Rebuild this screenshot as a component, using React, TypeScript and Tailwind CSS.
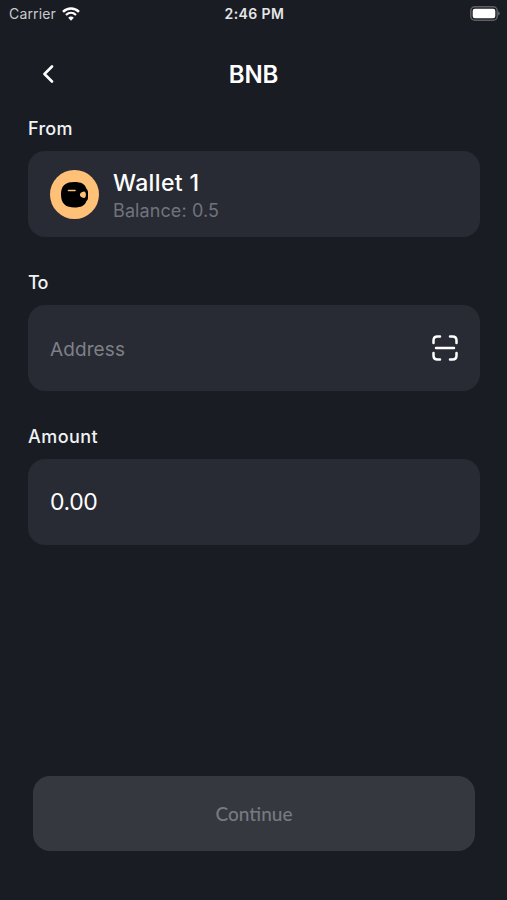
import type { ReactNode } from "react";

function Field({ label, tracking = "", children }: { label: string; tracking?: string; children: ReactNode }) {
  return (
    <section>
      <h2 className={`flex h-[24px] items-center text-[18px] font-medium text-[#f1f2f4] ${tracking}`}>{label}</h2>
      <div className="mt-[11px] flex h-[86px] items-center rounded-[17px] bg-[#282b33] px-[22px]">{children}</div>
    </section>
  );
}

function StatusBar() {
  return (
    <div className="grid h-[27px] grid-cols-3 items-center pl-[9px] pr-[7px] font-['Inter',sans-serif] text-[14px]">
      <div className="flex items-center gap-[6px] text-[#c9cbce]">
        <span className="tracking-[0.15px]">Carrier</span>
        <svg width="18" height="14" viewBox="0 0 18 14" fill="none" stroke="#fff">
          <path d="M1 4.8C5.6.4 12.4.4 17 4.8" strokeWidth="2.5" />
          <path d="M4 8C7 5.2 11 5.2 14 8" strokeWidth="2.3" />
          <path d="M9 13.7 6.2 10.7C7.8 9.2 10.2 9.2 11.8 10.7Z" fill="#fff" stroke="none" />
        </svg>
      </div>
      <span className="text-center font-semibold tracking-[0.4px] text-[#e5e6e8]">2:46 PM</span>
      <svg className="justify-self-end" width="30" height="15" viewBox="0 0 30 15">
        <rect x="0.8" y="0.8" width="26.4" height="13.4" rx="4" fill="none" stroke="#5d5f65" strokeWidth="1.5" />
        <rect x="2.7" y="2.7" width="22.6" height="9.6" rx="2.2" fill="#fff" />
        <path d="M28.3 5.3q2.7 2.2 0 4.4Z" fill="#777a80" />
      </svg>
    </div>
  );
}

export default function App() {
  return (
    <main className="flex h-[900px] w-[507px] flex-col bg-[#191c23] font-['Inter',sans-serif] text-white">
      <StatusBar />
      <header className="grid h-[89px] grid-cols-[80px_1fr_80px] items-center pt-[4px]">
        <button aria-label="Back" className="justify-self-end pr-[26px]">
          <svg width="12" height="18" viewBox="0 0 12 18" fill="none" stroke="#fff" strokeWidth="2.6" strokeLinecap="round" strokeLinejoin="round">
            <path d="M10 1.5 2.5 9l7.5 7.5" />
          </svg>
        </button>
        <h1 className="pt-[2px] text-center text-[24px] font-semibold leading-[32px] tracking-[-0.2px]">BNB</h1>
      </header>
      <div className="flex flex-col gap-[33px] pl-[28px] pr-[27px]">
        <Field label="From" tracking="tracking-[0.3px]">
          <svg width="49" height="49" viewBox="0 0 49 49">
            <circle cx="24.5" cy="24.5" r="24.5" fill="#ffc078" />
            <path d="M24.5 12C31 12 35 14 36.300 18.500Q38 20 38 22V28Q38 30 36.500 31C35 35.500 31 37.500 24.500 37.500 16 37.500 11 34 11 24.500S16 12 24.500 12Z" fill="#000" />
            <path d="M18.5 20.5H25" stroke="#ffc078" strokeWidth="1.6" strokeLinecap="round" />
            <path d="M34 21.500c-5.500.5-5.500 6 0 6.500 2.500 0 2.500-6.500 0-6.500Z" fill="#ffc078" />
          </svg>
          <div className="ml-[14px] pt-[3px]">
            <div className="text-[23px] font-medium leading-[30px] tracking-[0.35px]">Wallet 1</div>
            <div className="text-[18px] leading-[26px] tracking-[0.1px] text-[#70737d]">Balance: 0.5</div>
          </div>
        </Field>
        <Field label="To" tracking="tracking-[-0.8px]">
          <span className="flex-1 pt-[4px] text-[19px] tracking-[0.1px] text-[#7e8087]">Address</span>
          <svg width="26" height="26" viewBox="0 0 26 26" fill="none" stroke="#fff" strokeWidth="2.5" strokeLinecap="round">
            <path d="M1.5 8V5.5q0-4 4-4H8M18 1.5h2.5q4 0 4 4V8M24.5 18v2.5q0 4-4 4H18M8 24.5H5.5q-4 0-4-4V18M4 13h18" />
          </svg>
        </Field>
        <Field label="Amount" tracking="tracking-[0.45px]">
          <span className="text-[23px] tracking-[-0.4px]">0.00</span>
        </Field>
      </div>
      <button className="mb-[49px] ml-[33px] mt-auto h-[75px] w-[442px] rounded-[17px] bg-[#35383f] pt-[2px] font-['Lato',sans-serif] text-[19px] font-medium text-[#777a80]">
        Continue
      </button>
    </main>
  );
}
